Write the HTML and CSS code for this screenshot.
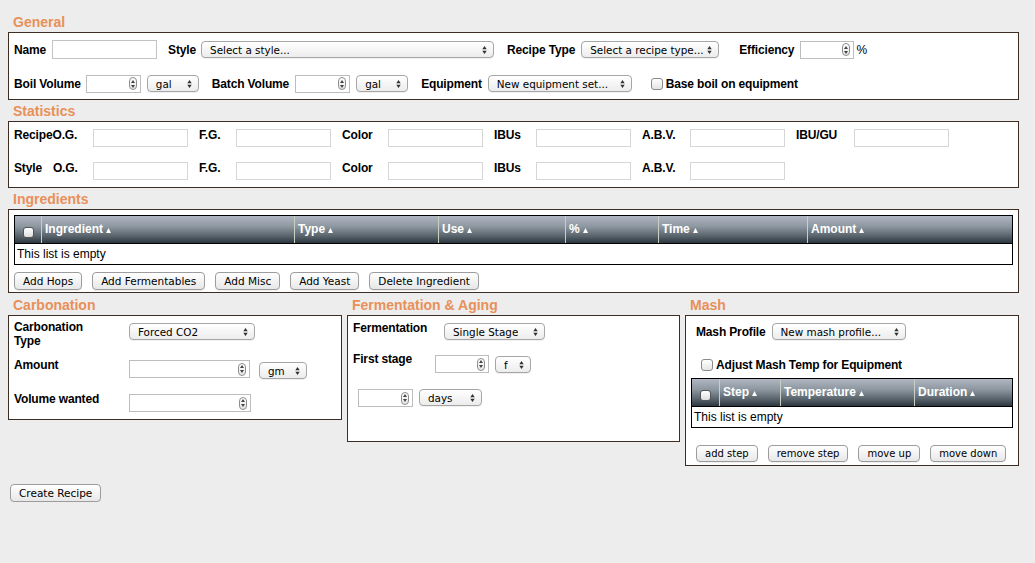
FILE: index.html
```html
<!DOCTYPE html>
<html>
<head>
<meta charset="utf-8">
<title>New Recipe</title>
<link rel="stylesheet" href="styles.css">
</head>
<body>
<div class="page">
  <h2 class="title first">General</h2>
  <div class="panel general">
    <div class="row">
      <span class="lbl mr6">Name</span>
      <div class="txt w105"></div>
      <span class="lbl ml11">Style</span>
      <div class="sel w293"><span>Select a style...</span><svg class="arr" viewBox="0 0 5 9"><path d="M0 3.6L2.5 0L5 3.6Z M0 5.4L2.5 9L5 5.4Z"/></svg></div>
      <span class="lbl ml13 mr6">Recipe Type</span>
      <div class="sel w138"><span>Select a recipe type...</span><svg class="arr" viewBox="0 0 5 9"><path d="M0 3.6L2.5 0L5 3.6Z M0 5.4L2.5 9L5 5.4Z"/></svg></div>
      <span class="lbl ml20 mr6">Efficiency</span>
      <div class="num w54"><span class="spin"><svg viewBox="0 0 4 8"><path d="M0 3L2 0L4 3Z M0 5L2 8L4 5Z"/></svg></span></div>
      <span class="pct">%</span>
    </div>
    <div class="row">
      <span class="lbl">Boil Volume</span>
      <div class="num w55"><span class="spin"><svg viewBox="0 0 4 8"><path d="M0 3L2 0L4 3Z M0 5L2 8L4 5Z"/></svg></span></div>
      <div class="sel w52 ml6"><span>gal</span><svg class="arr" viewBox="0 0 5 9"><path d="M0 3.6L2.5 0L5 3.6Z M0 5.4L2.5 9L5 5.4Z"/></svg></div>
      <span class="lbl ml13 mr6">Batch Volume</span>
      <div class="num w55"><span class="spin"><svg viewBox="0 0 4 8"><path d="M0 3L2 0L4 3Z M0 5L2 8L4 5Z"/></svg></span></div>
      <div class="sel w52 ml6"><span>gal</span><svg class="arr" viewBox="0 0 5 9"><path d="M0 3.6L2.5 0L5 3.6Z M0 5.4L2.5 9L5 5.4Z"/></svg></div>
      <span class="lbl ml13 mr6">Equipment</span>
      <div class="sel w144"><span>New equipment set...</span><svg class="arr" viewBox="0 0 5 9"><path d="M0 3.6L2.5 0L5 3.6Z M0 5.4L2.5 9L5 5.4Z"/></svg></div>
      <span class="chk ml19"></span>
      <span class="lbl ml3">Base boil on equipment</span>
    </div>
  </div>

  <h2 class="title">Statistics</h2>
  <div class="panel stats">
    <span class="lbl">RecipeO.G.</span><div class="box"></div>
    <span class="lbl">F.G.</span><div class="box"></div>
    <span class="lbl">Color</span><div class="box"></div>
    <span class="lbl">IBUs</span><div class="box"></div>
    <span class="lbl">A.B.V.</span><div class="box"></div>
    <span class="lbl">IBU/GU</span><div class="box"></div>
    <span class="lbl"><span class="mr11">Style</span>O.G.</span><div class="box"></div>
    <span class="lbl">F.G.</span><div class="box"></div>
    <span class="lbl">Color</span><div class="box"></div>
    <span class="lbl">IBUs</span><div class="box"></div>
    <span class="lbl">A.B.V.</span><div class="box"></div>
  </div>

  <h2 class="title">Ingredients</h2>
  <div class="panel ingredients">
    <div class="list">
      <div class="thead ing-cols">
        <div class="th th-chk"><span class="hchk"></span></div>
        <div class="th">Ingredient<svg class="sort" viewBox="0 0 5 5"><path d="M2.5 0L5 5H0Z"/></svg></div>
        <div class="th">Type<svg class="sort" viewBox="0 0 5 5"><path d="M2.5 0L5 5H0Z"/></svg></div>
        <div class="th">Use<svg class="sort" viewBox="0 0 5 5"><path d="M2.5 0L5 5H0Z"/></svg></div>
        <div class="th">%<svg class="sort" viewBox="0 0 5 5"><path d="M2.5 0L5 5H0Z"/></svg></div>
        <div class="th">Time<svg class="sort" viewBox="0 0 5 5"><path d="M2.5 0L5 5H0Z"/></svg></div>
        <div class="th">Amount<svg class="sort" viewBox="0 0 5 5"><path d="M2.5 0L5 5H0Z"/></svg></div>
      </div>
      <div class="empty">This list is empty</div>
    </div>
    <div class="btns">
      <span class="btn">Add Hops</span>
      <span class="btn">Add Fermentables</span>
      <span class="btn">Add Misc</span>
      <span class="btn">Add Yeast</span>
      <span class="btn">Delete Ingredient</span>
    </div>
  </div>

  <div class="cols">
    <div class="col col-carb">
      <h2 class="title">Carbonation</h2>
      <div class="panel carb">
        <span class="lbl wrap">Carbonation Type</span>
        <div class="ctl"><div class="sel w126 mt3"><span>Forced CO2</span><svg class="arr" viewBox="0 0 5 9"><path d="M0 3.6L2.5 0L5 3.6Z M0 5.4L2.5 9L5 5.4Z"/></svg></div></div>
        <span class="lbl">Amount</span>
        <div class="ctl">
          <div class="num w121 mt2"><span class="spin"><svg viewBox="0 0 4 8"><path d="M0 3L2 0L4 3Z M0 5L2 8L4 5Z"/></svg></span></div>
          <div class="sel w48 ml9 mt4"><span>gm</span><svg class="arr" viewBox="0 0 5 9"><path d="M0 3.6L2.5 0L5 3.6Z M0 5.4L2.5 9L5 5.4Z"/></svg></div>
        </div>
        <span class="lbl r3">Volume wanted</span>
        <div class="ctl r3">
          <div class="num w122 mt2"><span class="spin"><svg viewBox="0 0 4 8"><path d="M0 3L2 0L4 3Z M0 5L2 8L4 5Z"/></svg></span></div>
        </div>
      </div>
    </div>

    <div class="col col-ferm">
      <h2 class="title">Fermentation &amp; Aging</h2>
      <div class="panel ferm">
        <div class="frow">
          <span class="lbl lw91">Fermentation</span>
          <div class="sel w101 mt2"><span>Single Stage</span><svg class="arr" viewBox="0 0 5 9"><path d="M0 3.6L2.5 0L5 3.6Z M0 5.4L2.5 9L5 5.4Z"/></svg></div>
        </div>
        <div class="frow f2">
          <span class="lbl lw82">First stage</span>
          <div class="num w54 mt3"><span class="spin"><svg viewBox="0 0 4 8"><path d="M0 3L2 0L4 3Z M0 5L2 8L4 5Z"/></svg></span></div>
          <div class="sel w36 ml6 mt4"><span>f</span><svg class="arr" viewBox="0 0 5 9"><path d="M0 3.6L2.5 0L5 3.6Z M0 5.4L2.5 9L5 5.4Z"/></svg></div>
        </div>
        <div class="frow f3">
          <div class="num w55"><span class="spin"><svg viewBox="0 0 4 8"><path d="M0 3L2 0L4 3Z M0 5L2 8L4 5Z"/></svg></span></div>
          <div class="sel w63 ml6"><span>days</span><svg class="arr" viewBox="0 0 5 9"><path d="M0 3.6L2.5 0L5 3.6Z M0 5.4L2.5 9L5 5.4Z"/></svg></div>
        </div>
      </div>
    </div>

    <div class="col col-mash">
      <h2 class="title">Mash</h2>
      <div class="panel mash">
        <div class="mrow">
          <span class="lbl mr6">Mash Profile</span>
          <div class="sel w134"><span>New mash profile...</span><svg class="arr" viewBox="0 0 5 9"><path d="M0 3.6L2.5 0L5 3.6Z M0 5.4L2.5 9L5 5.4Z"/></svg></div>
        </div>
        <div class="mrow m2">
          <span class="chk"></span>
          <span class="lbl ml3">Adjust Mash Temp for Equipment</span>
        </div>
        <div class="list mlist">
          <div class="thead mash-cols">
            <div class="th th-chk"><span class="hchk"></span></div>
            <div class="th">Step<svg class="sort" viewBox="0 0 5 5"><path d="M2.5 0L5 5H0Z"/></svg></div>
            <div class="th">Temperature<svg class="sort" viewBox="0 0 5 5"><path d="M2.5 0L5 5H0Z"/></svg></div>
            <div class="th">Duration<svg class="sort" viewBox="0 0 5 5"><path d="M2.5 0L5 5H0Z"/></svg></div>
          </div>
          <div class="empty">This list is empty</div>
        </div>
        <div class="btns mbtns">
          <span class="btn">add step</span>
          <span class="btn">remove step</span>
          <span class="btn">move up</span>
          <span class="btn">move down</span>
        </div>
      </div>
    </div>
  </div>

  <span class="btn create">Create Recipe</span>
</div>
</body>
</html>
```

FILE: styles.css
```css
* { box-sizing: border-box; }

body {
  margin: 8px;
  background: #ededed;
  font-family: "Liberation Sans", Arial, Helvetica, sans-serif;
  font-size: 12px;
  color: #000;
}

.page { width: 1011px; }

.title {
  margin: 1px 0 0 5px;
  font-size: 14px;
  line-height: 20px;
  font-weight: bold;
  color: #e8905a;
}
.title.first { margin-top: 4px; }

.panel {
  background: #fff;
  border: 1px solid #3d2d22;
}

.lbl {
  font-weight: bold;
  letter-spacing: -0.15px;
  white-space: nowrap;
  margin-right: 5px;
}

/* spacing helpers */
.lbl.mr6 { margin-right: 6px; }
.mr11 { margin-right: 11px; }
.ml3 { margin-left: 3px; }
.ml6 { margin-left: 6px; }
.ml9 { margin-left: 9px; }
.ml11 { margin-left: 11px; }
.ml13 { margin-left: 13px; }
.ml19 { margin-left: 19px; }
.ml20 { margin-left: 20px; }
.mt2 { margin-top: 2px; }
.mt3 { margin-top: 3px; }
.mt4 { margin-top: 4px; }

/* widths */
.w36 { width: 36px; }
.w48 { width: 48px; }
.w52 { width: 52px; }
.w54 { width: 54px; }
.w55 { width: 55px; }
.w63 { width: 63px; }
.w101 { width: 101px; }
.w105 { width: 105px; }
.w121 { width: 121px; }
.w122 { width: 122px; }
.w126 { width: 126px; }
.w134 { width: 134px; }
.w138 { width: 138px; }
.w144 { width: 144px; }
.w293 { width: 293px; }

/* controls */
.txt {
  height: 19px;
  border: 1px solid #c3c3c3;
  background: #fff;
  flex: none;
}

.num {
  height: 18px;
  border: 1px solid #bdbdbd;
  background: #fff;
  display: flex;
  justify-content: flex-end;
  align-items: center;
  padding-right: 3px;
  flex: none;
}

.spin {
  width: 8px;
  height: 13px;
  border: 1px solid #8e8e8e;
  border-radius: 4px;
  background: linear-gradient(#ffffff, #e6e6e6);
  display: flex;
  align-items: center;
  justify-content: center;
}
.spin svg { width: 4px; height: 8px; fill: #444; display: block; }

.sel {
  height: 17px;
  border: 1px solid #a6a6a6;
  border-radius: 4px;
  background: linear-gradient(#ffffff, #ececec);
  box-shadow: 0 1px 0 rgba(0, 0, 0, 0.06);
  display: flex;
  align-items: center;
  justify-content: space-between;
  padding: 0 6px 0 8px;
  font-family: "DejaVu Sans", "Lucida Grande", sans-serif;
  font-size: 10.4px;
  white-space: nowrap;
  flex: none;
}
.sel span { overflow: hidden; }
.arr { width: 5px; height: 8px; fill: #333; flex: none; display: block; margin-left: 4px; }

.chk {
  width: 12px;
  height: 12px;
  border: 1px solid #8a8a8a;
  border-radius: 3px;
  background: linear-gradient(#ffffff, #e4e4e4);
  flex: none;
}

.btn {
  display: inline-flex;
  align-items: center;
  height: 18px;
  padding: 0 8px;
  border: 1px solid #9c9c9c;
  border-radius: 4px;
  background: linear-gradient(#ffffff, #e7e7e7);
  box-shadow: 0 1px 0 rgba(0, 0, 0, 0.06);
  font-family: "DejaVu Sans", "Lucida Grande", sans-serif;
  font-size: 10.5px;
  white-space: nowrap;
}

.pct { margin-left: 2px; font-size: 12px; }

/* General */
.general {
  padding: 7px 5px 6px;
  display: flex;
  flex-direction: column;
  gap: 15px;
}
.general .row {
  display: flex;
  align-items: center;
  height: 19px;
}

/* Statistics */
.stats {
  padding: 7px 5px 7px;
  display: grid;
  grid-template-columns: 79px 106px 37px 106px 46px 106px 42px 106px 48px 106px 58px 95px;
  row-gap: 15px;
  align-items: start;
}
.stats .lbl { line-height: 14px; margin: -1px 0 0 0; }
.stats .box {
  width: 95px;
  height: 18px;
  border: 1px solid #d6d6d6;
  background: #fff;
}

/* Lists */
.ingredients { padding: 5px 5px 2px; }
.list {
  border: 1px solid #000;
  background: #fff;
}
.thead {
  display: grid;
  height: 28px;
  border-bottom: 1px solid #000;
  background: linear-gradient(#b0b7c2 0%, #8c969f 40%, #57626b 75%, #2c363e 100%);
}
.ing-cols { grid-template-columns: 26px 253px 144px 127px 93px 149px 1fr; }
.mash-cols { grid-template-columns: 27px 61px 134px 1fr; }
.th {
  border-left: 1px solid #c9cfc1;
  color: #fff;
  font-weight: bold;
  font-size: 12px;
  line-height: 26px;
  padding-left: 3px;
  white-space: nowrap;
}
.th.th-chk {
  border-left: 0;
  padding: 11px 0 0 0;
  display: flex;
  justify-content: center;
  align-items: flex-start;
}
.hchk {
  width: 11px;
  height: 11px;
  border-radius: 3px;
  border: 1px solid #555;
  background: linear-gradient(#ffffff, #dcdcdc);
}
.sort { width: 5px; height: 5px; fill: #fff; margin-left: 3px; }
.empty {
  height: 20px;
  line-height: 20px;
  padding-left: 2px;
  font-size: 12px;
}
.btns {
  display: flex;
  gap: 10px;
  margin-top: 7px;
}

/* bottom columns */
.cols {
  display: flex;
  gap: 5px;
  align-items: flex-start;
}
.cols .title { margin-top: 2px; }
.col-carb { width: 334px; }
.col-ferm { width: 333px; }
.col-mash { width: 334px; }

.carb {
  padding: 4px 5px 7px;
  display: grid;
  grid-template-columns: 115px auto;
  row-gap: 10px;
  align-items: start;
}
.carb .lbl { line-height: 14px; margin: 0; }
.carb .lbl.wrap { white-space: normal; width: 90px; }
.carb .ctl { display: flex; align-items: flex-start; }
.carb .r3 { margin-top: 3px; }

.ferm {
  height: 127px;
  padding: 5px 5px 0;
}
.frow { display: flex; align-items: flex-start; }
.frow .lbl { line-height: 14px; margin: 0; }
.lw91 { width: 91px; }
.lw82 { width: 82px; }
.f2 { margin-top: 12px; }
.f3 { margin-top: 16px; padding-left: 5px; }

.mash {
  height: 151px;
  padding: 7px 5px 0;
}
.mrow { display: flex; align-items: center; padding-left: 5px; height: 17px; }
.mrow.m2 { margin-top: 19px; padding-left: 10px; height: 12px; }
.mlist { margin-top: 7px; }
.mbtns { padding-left: 5px; margin-top: 17px; }
.mbtns .btn { height: 17px; font-size: 10px; }

.create { margin: 18px 0 0 2px; }
```
